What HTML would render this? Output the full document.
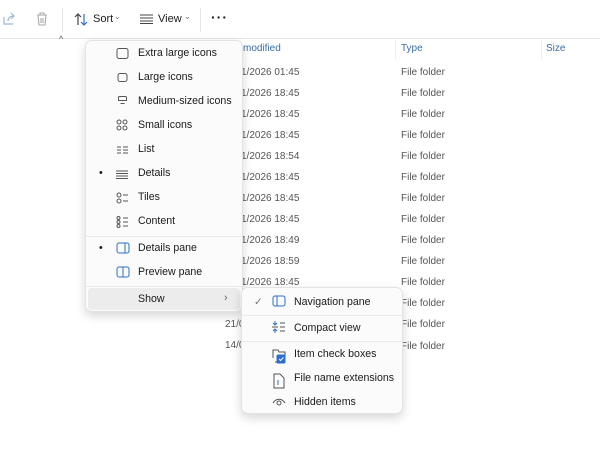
<!DOCTYPE html>
<html><head><meta charset="utf-8"><style>
*{margin:0;padding:0;box-sizing:border-box}
body{width:600px;height:450px;background:#fff;font-family:"Liberation Sans",sans-serif;position:relative;overflow:hidden;color:#1a1a1a}
.a{position:absolute;white-space:nowrap}
.s{font-size:11px}
.g{color:#555;font-size:10px}
.m{position:absolute;background:#fbfbfb;border:1px solid #e3e3e3;border-radius:7px;box-shadow:0 4px 10px rgba(0,0,0,.16)}
.it{position:absolute;font-size:10.6px;color:#1a1a1a;white-space:nowrap}
svg{position:absolute}
</style></head><body>
<div class="a" style="left:0;top:38px;width:600px;border-top:1px solid #e5e5e5"></div>
<svg style="left:2px;top:12px" width="14" height="14" viewBox="0 0 14 14" fill="none" stroke="#9ab8d6" stroke-width="1.2"><path d="M2 5v7h9M6 9c0-3 2-5 6-5M9 1l3 3-3 3"/></svg>
<svg style="left:36px;top:12px" width="12" height="14" viewBox="0 0 12 14" fill="none" stroke="#aaa" stroke-width="1.1"><path d="M1 3h10M4 3V1h4v2M2 3l1 10h6l1-10M5 6v5M7 6v5"/></svg>
<div class="a" style="left:62px;top:8px;height:24px;border-left:1px solid #e5e5e5"></div>
<svg style="left:74px;top:13px" width="14" height="13" viewBox="0 0 14 13" fill="none" stroke-width="1.2"><path d="M4 12V1M1 4l3-3 3 3" stroke="#444"/><path d="M10 1v11M7 9l3 3 3-3" stroke="#2a6fcf"/></svg>
<div class="a s" style="left:93px;top:13px">Sort</div>
<div class="a" style="left:114px;top:12px;font-size:8px;color:#777">⌄</div>
<svg style="left:140px;top:14px" width="13" height="10" viewBox="0 0 13 10" stroke="#444" stroke-width="1"><path d="M0 1h13M0 4h13M0 7h13M0 9.5h13"/></svg>
<div class="a s" style="left:158px;top:13px">View</div>
<div class="a" style="left:184px;top:12px;font-size:8px;color:#777">⌄</div>
<div class="a" style="left:200px;top:8px;height:24px;border-left:1px solid #e5e5e5"></div>
<div class="a" style="left:211px;top:9px;font-size:14px;font-weight:bold;letter-spacing:1px">···</div>
<div class="a" style="left:59px;top:34px;font-size:9px;color:#555">^</div>
<div class="a g" style="left:243px;top:43px;color:#3a6ea5">modified</div>
<div class="a" style="left:395px;top:40px;height:20px;border-left:1px solid #eee"></div>
<div class="a g" style="left:401px;top:43px;color:#3a6ea5">Type</div>
<div class="a" style="left:541px;top:40px;height:20px;border-left:1px solid #eee"></div>
<div class="a g" style="left:546px;top:43px;color:#3a6ea5">Size</div>
<div class="a g" style="left:241px;top:61.5px;line-height:21.08px">1/2026 01:45<br>1/2026 18:45<br>1/2026 18:45<br>1/2026 18:45<br>1/2026 18:54<br>1/2026 18:45<br>1/2026 18:45<br>1/2026 18:45<br>1/2026 18:49<br>1/2026 18:59<br>1/2026 18:45</div>
<div class="a g" style="left:225px;top:314px;line-height:21.08px">21/0<br>14/0</div>
<div class="a g" style="left:401px;top:61.5px;line-height:21.08px">File folder<br>File folder<br>File folder<br>File folder<br>File folder<br>File folder<br>File folder<br>File folder<br>File folder<br>File folder<br>File folder<br>File folder<br>File folder<br>File folder</div>
<div class="m" style="left:85px;top:40px;width:158px;height:272px">
<div class="a" style="left:0;top:195px;width:156px;border-top:1px solid #eaeaea"></div>
<div class="a" style="left:0;top:245px;width:156px;border-top:1px solid #eaeaea"></div>
<div class="a" style="left:2px;top:247px;width:152px;height:22px;background:#ececec;border-radius:4px"></div>
</div>
<svg style="left:116px;top:47px" width="14" height="250" fill="none" stroke="#555" stroke-width="1">
<rect x="1" y="1.5" width="11" height="10" rx="2"/><rect x="2" y="26.5" width="9" height="8" rx="2"/><path d="M3.5 49.5h6a1 1 0 0 1 1 1v3h-8v-3a1 1 0 0 1 1-1zM4.5 56.5h4"/>
<circle cx="3" cy="75" r="2"/><circle cx="9" cy="75" r="2"/><circle cx="3" cy="81" r="2"/><circle cx="9" cy="81" r="2"/>
<path d="M1 100h4M1 103h4M1 106h4M7 100h5M7 103h5M7 106h5M0 124h12M0 126.5h12M0 129h12M0 131.5h12"/>
<circle cx="3" cy="148" r="2"/><circle cx="3" cy="154" r="2"/><path d="M7 148h5M7 154h5"/>
<circle cx="2.5" cy="171" r="1.5"/><circle cx="2.5" cy="175" r="1.5"/><circle cx="2.5" cy="179" r="1.5"/><path d="M7 171h5M7 175h5M7 179h5"/>
<rect x="1" y="196" width="12" height="10" rx="2" stroke="#2a6fcf"/><path d="M9 196v10" stroke="#2a6fcf"/>
<rect x="1" y="220" width="12" height="10" rx="2" stroke="#2a6fcf"/><path d="M7 220v10" stroke="#2a6fcf"/>
</svg>
<div class="it" style="left:138px;top:47px">Extra large icons</div>
<div class="it" style="left:138px;top:71px">Large icons</div>
<div class="it" style="left:138px;top:95px">Medium-sized icons</div>
<div class="it" style="left:138px;top:119px">Small icons</div>
<div class="it" style="left:138px;top:143px">List</div>
<div class="it" style="left:99px;top:167px">•</div>
<div class="it" style="left:138px;top:167px">Details</div>
<div class="it" style="left:138px;top:191px">Tiles</div>
<div class="it" style="left:138px;top:215px">Content</div>
<div class="it" style="left:99px;top:242px">•</div>
<div class="it" style="left:138px;top:242px">Details pane</div>
<div class="it" style="left:138px;top:266px">Preview pane</div>
<div class="it" style="left:138px;top:293px">Show</div>
<div class="it" style="left:224px;top:292px;color:#666">›</div>
<div class="m" style="left:241px;top:287px;width:162px;height:127px">
<div class="a" style="left:0;top:27px;width:160px;border-top:1px solid #eaeaea"></div>
<div class="a" style="left:0;top:53px;width:160px;border-top:1px solid #eaeaea"></div>
</div>
<div class="it" style="left:254px;top:296px;color:#777">✓</div>
<svg style="left:272px;top:294px" width="14" height="115" fill="none" stroke="#555" stroke-width="1">
<rect x="1" y="2" width="12" height="10" rx="2" stroke="#2a6fcf"/><path d="M5 2v10" stroke="#2a6fcf"/>
<path d="M3 27v4M1 29l2 2 2-2M3 39v-4M1 37l2-2 2 2" stroke="#2a6fcf"/><path d="M0 33h6M8 29h5M8 33h5M8 37h5"/>
<path d="M1 64v-8h5l1 2h6v10H3"/><rect x="5" y="61" width="8" height="8" rx="1" fill="#2a6fcf" stroke="#2a6fcf"/><path d="M7 65l1.5 1.5 3-3" stroke="#fff"/>
<path d="M2 80h6l4 4v10H2z"/><path d="M6 86v5" stroke="#2a6fcf"/>
<path d="M1 109c3-5 9-5 12 0"/><circle cx="7" cy="109" r="2"/>
</svg>
<div class="it" style="left:294px;top:296px">Navigation pane</div>
<div class="it" style="left:294px;top:322px">Compact view</div>
<div class="it" style="left:294px;top:348px">Item check boxes</div>
<div class="it" style="left:294px;top:372px">File name extensions</div>
<div class="it" style="left:294px;top:396px">Hidden items</div>
</body></html>
